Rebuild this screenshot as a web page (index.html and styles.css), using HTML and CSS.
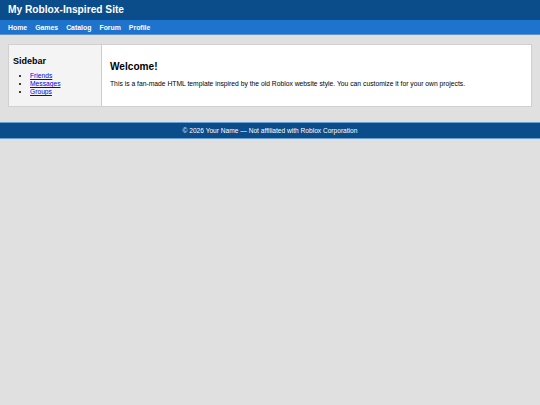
FILE: index.html
```html
<!DOCTYPE html>
<html>
<head>
<meta charset="utf-8">
<title>My Roblox-Inspired Site</title>
<link rel="stylesheet" href="styles.css">
</head>
<body>
<header class="site-header">
  <div class="site-title">My Roblox-Inspired Site</div>
</header>
<nav class="site-nav">
  <a href="#">Home</a>
  <a href="#">Games</a>
  <a href="#">Catalog</a>
  <a href="#">Forum</a>
  <a href="#">Profile</a>
</nav>
<div class="container">
  <aside class="sidebar">
    <div class="sidebar-title">Sidebar</div>
    <ul class="sidebar-list">
      <li><a href="#">Friends</a></li>
      <li><a href="#">Messages</a></li>
      <li><a href="#">Groups</a></li>
    </ul>
  </aside>
  <main class="content">
    <div class="content-title">Welcome!</div>
    <p class="content-text">This is a fan-made HTML template inspired by the old Roblox website style. You can customize it for your own projects.</p>
  </main>
</div>
<footer class="site-footer">© 2026 Your Name — Not affiliated with Roblox Corporation</footer>
</body>
</html>
```
FILE: styles.css
```css
html, body {
  margin: 0;
  padding: 0;
}
body {
  background: #e0e0e0;
  font-family: "Liberation Sans", Arial, sans-serif;
  color: #000;
}
.site-header {
  background: #0b4c8a;
  padding: 0 8px;
  height: 20px;
  display: flex;
  align-items: center;
}
.site-title {
  font-size: 10.2px;
  line-height: 12px;
  color: #fff;
  font-weight: bold;
}
.site-nav {
  background: #1e73cc;
  border-bottom: 1px solid #5a94d4;
  padding: 0 8px;
  height: 14px;
  display: flex;
  align-items: center;
  gap: 8px;
}
.site-nav a {
  color: #fff;
  font-size: 6.9px;
  font-weight: bold;
  text-decoration: none;
}
.site-footer {
  margin-top: 15px;
  background: #0b4c8a;
  border-top: 1px solid #6a9fd6;
  border-bottom: 1px solid #6a9fd6;
  color: #fff;
  font-size: 6.6px;
  text-align: center;
  height: 15px;
  line-height: 15px;
}
.container {
  display: flex;
  margin: 9px 8px 0 8px;
  height: 61px;
  background: #fff;
  border: 1px solid #d0d0d0;
}
.sidebar {
  width: 88px;
  background: #f4f4f4;
  border-right: 1px solid #cccccc;
  padding: 0 0 0 4px;
}
.sidebar-title {
  margin: 11px 0 6px 0;
  font-size: 9px;
  line-height: 10px;
  font-weight: bold;
}
.sidebar-list {
  margin: 0;
  padding-left: 17px;
  font-size: 6.7px;
  line-height: 8px;
}
.sidebar-list a {
  color: #0000ee;
}
.content {
  flex: 1;
  padding: 0 8px;
}
.content-title {
  margin: 16px 0 6px 0;
  font-size: 10.1px;
  line-height: 12px;
  font-weight: bold;
}
.content-text {
  margin: 0;
  font-size: 6.75px;
  line-height: 9px;
}
```
